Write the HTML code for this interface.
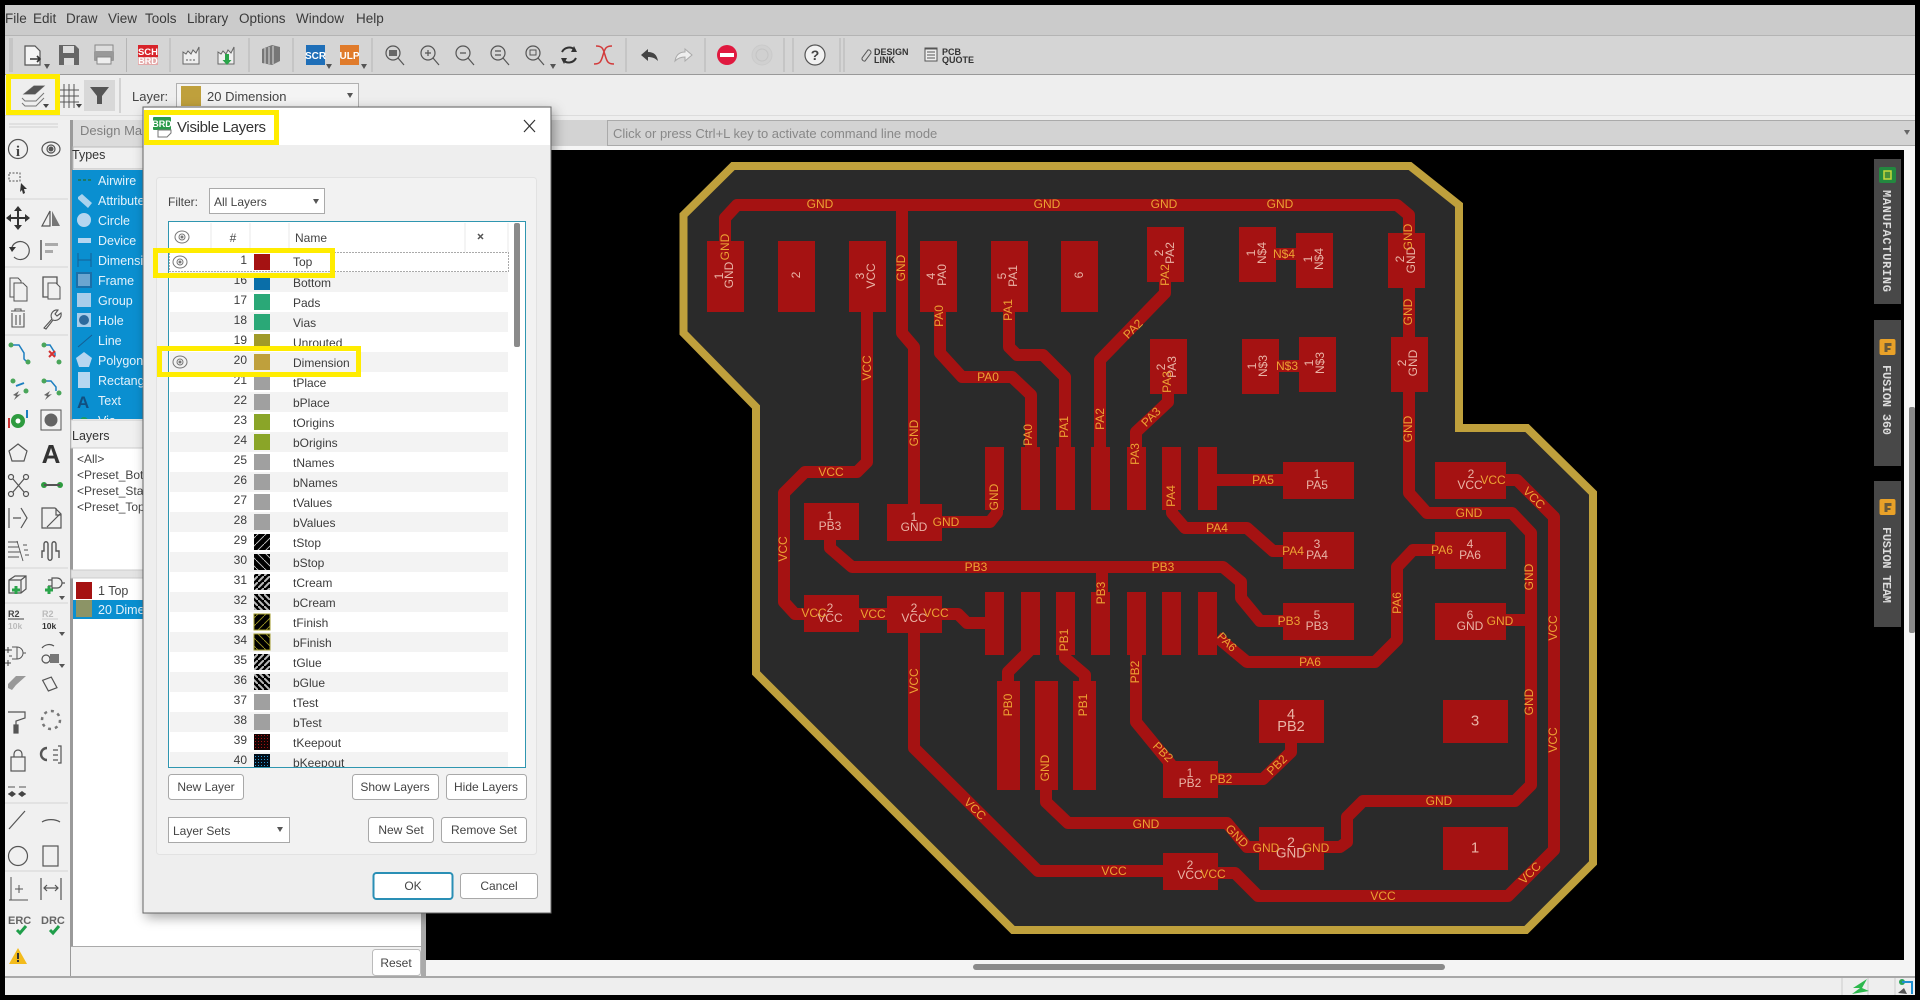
<!DOCTYPE html>
<html lang="en"><head><meta charset="utf-8"><title>EAGLE Visible Layers</title>
<style>
html,body{margin:0;padding:0;background:#000;width:1920px;height:1000px;overflow:hidden}
svg{display:block}
text{font-family:"Liberation Sans",sans-serif}
.o text,text.o{fill:#eda233;font-size:12px;text-anchor:middle;dominant-baseline:central}
.p text{fill:#e9b4a6;font-size:12px;text-anchor:middle;dominant-baseline:central}
.m text{fill:#3a3a3a;font-size:13.5px}
.u{fill:#3c3c3c;font-size:12px}
.b{fill:#444;font-size:12px;text-anchor:middle}
.w{fill:#e4f2fb;font-size:12.5px}
.v text{fill:#dcdcdc;font-family:"Liberation Mono",monospace;font-size:12px;font-weight:bold}
.i{fill:none;stroke:#555;stroke-width:1.2}
</style></head><body>
<svg width="1920" height="1000" viewBox="0 0 1920 1000" xmlns="http://www.w3.org/2000/svg">
<defs>
<filter id="sh" x="-10%" y="-10%" width="125%" height="125%"><feDropShadow dx="3" dy="4" stdDeviation="6" flood-color="#000" flood-opacity=".35"/></filter>
<pattern id="h1" width="8" height="8" patternUnits="userSpaceOnUse"><rect width="8" height="8" fill="#000"/><path d="M0 8L8 0" stroke="#ccc" stroke-width=".9"/></pattern>
<pattern id="h2" width="8" height="8" patternUnits="userSpaceOnUse"><rect width="8" height="8" fill="#000"/><path d="M0 0L8 8" stroke="#ccc" stroke-width=".9"/></pattern>
<pattern id="h3" width="6" height="6" patternUnits="userSpaceOnUse"><rect width="6" height="6" fill="#000"/><path d="M-1 7L7 -1" stroke="#bbb" stroke-width="2"/></pattern>
<pattern id="h4" width="6" height="6" patternUnits="userSpaceOnUse"><rect width="6" height="6" fill="#000"/><path d="M-1 -1L7 7" stroke="#bbb" stroke-width="2"/></pattern>
<pattern id="h5" width="8" height="8" patternUnits="userSpaceOnUse"><rect width="8" height="8" fill="#000"/><path d="M0 8L8 0" stroke="#a09a28" stroke-width=".9"/></pattern>
<pattern id="h6" width="8" height="8" patternUnits="userSpaceOnUse"><rect width="8" height="8" fill="#000"/><path d="M0 0L8 8" stroke="#a09a28" stroke-width=".9"/></pattern>
<pattern id="d1" width="3" height="3" patternUnits="userSpaceOnUse"><rect width="3" height="3" fill="#160404"/><rect width="1" height="1" fill="#a51212"/></pattern>
<pattern id="d2" width="3" height="3" patternUnits="userSpaceOnUse"><rect width="3" height="3" fill="#03101c"/><rect width="1" height="1" fill="#2a9ad8"/></pattern>
<clipPath id="tb"><rect x="169" y="222" width="356" height="545"/></clipPath>
<clipPath id="bl"><rect x="72" y="170" width="120" height="249"/></clipPath>
<g id="eye"><ellipse cx="0" cy="0" rx="7" ry="6" fill="none" stroke="#777" stroke-width="1"/><circle r="3" fill="none" stroke="#777"/><circle r="1.5" fill="#777"/></g>
<g id="fo"><rect x="-8" y="-8" width="16" height="16" rx="2" fill="#e9a128"/><path d="M-3 5V-4H4V-1H0V1H3V3H0V5Z" fill="#6a5a3a"/></g>
</defs>

<rect width="1920" height="1000" fill="#000"/>
<rect x="5" y="5" width="1910" height="990" fill="#eee"/>

<!-- menu -->
<rect x="5" y="5" width="1910" height="30" fill="#cbcbcb"/>
<rect x="5" y="35" width="1910" height="1" fill="#b4b4b4"/>
<rect x="5" y="36" width="1910" height="38" fill="#d5d5d5"/>
<rect x="5" y="74" width="1910" height="1" fill="#999"/>
<rect x="5" y="75" width="1910" height="40" fill="#eee"/>
<rect x="5" y="115" width="1910" height="1" fill="#dcdcdc"/>
<g class="m"><text x="5" y="23">File</text><text x="33" y="23">Edit</text><text x="66" y="23">Draw</text><text x="108" y="23">View</text><text x="145" y="23">Tools</text><text x="187" y="23">Library</text><text x="239" y="23">Options</text><text x="296" y="23">Window</text><text x="356" y="23">Help</text></g>

<!-- toolbar separators -->
<path d="M10 38v34M12 38v34M126.500 38v34M170 38v34M249 38v34M293 38v34M372 38v34M626 38v34M705 38v34M784 38v34M793 38v34M840 38v34M844 38v34M120 78v35" stroke="#b5b5b5"/>
<!-- toolbar icons -->
<path d="M25 46h10l5 5v14H25z" fill="#f4f4f4" stroke="#555" stroke-width="1.200"/><path d="M30 59h10m-3-3l3 3-3 3" fill="none" stroke="#333" stroke-width="1.600"/><path d="M44 64h6l-3 5z" fill="#555"/>
<path d="M59 45h16l4 4v16H59z" fill="#666"/><rect x="63" y="46" width="11" height="7" fill="#ddd"/><rect x="64" y="58" width="10" height="7" fill="#ddd"/>
<rect x="95" y="45" width="18" height="7" fill="#ddd" stroke="#888"/><rect x="94" y="51" width="20" height="10" rx="1" fill="#999"/><rect x="97" y="57" width="14" height="7" fill="#eee" stroke="#888"/>
<rect x="138" y="45" width="20" height="12" fill="#d8232a"/><rect x="138" y="57" width="20" height="8" fill="#e4a8a8"/>
<text x="148" y="55" font-size="9.500" font-weight="bold" fill="#fff" text-anchor="middle">SCH</text><text x="148" y="64" font-size="9" font-weight="bold" fill="#fff" text-anchor="middle">BRD</text>
<path d="M183 64V52l3 2 2-3 3 3 2-4 3 3 3-6v17z" fill="#eee" stroke="#666"/><path d="M186 60h10" stroke="#555" stroke-dasharray="2 1.500"/>
<path d="M218 64V52l3 2 2-3 3 3 2-4 3 3 3-6v17z" fill="#eee" stroke="#666"/><path d="M225 54v6h-2.500l4.500 5 4.500-5H229v-6z" fill="#2aa44a"/>
<path d="M262 49l10-4 8 2v14l-8 4-10-2z" fill="#777"/><path d="M265 48v16M269 47v17M273 46v18" stroke="#ddd"/>
<rect x="306" y="45" width="19" height="20" fill="#1f6fb8"/><text x="315.500" y="59" font-size="10" font-weight="bold" fill="#fff" text-anchor="middle">SCR</text><path d="M326 64h6l-3 5z" fill="#555"/>
<rect x="340" y="45" width="19" height="20" fill="#e07b2b"/><text x="349.500" y="59" font-size="10" font-weight="bold" fill="#fff" text-anchor="middle">ULP</text><path d="M361 64h6l-3 5z" fill="#555"/>
<g fill="none" stroke="#555" stroke-width="1.200"><circle cx="393" cy="53" r="7"/><path d="M398 58l6 7"/><circle cx="428" cy="53" r="7"/><path d="M433 58l6 7M428 50v6M425 53h6"/><circle cx="463" cy="53" r="7"/><path d="M468 58l6 7M460 53h6"/><circle cx="498" cy="53" r="7"/><path d="M503 58l6 7M495 51h6M495 55h6"/><circle cx="533" cy="53" r="7"/><path d="M538 58l6 7"/></g>
<rect x="389" y="50" width="8" height="6" fill="#666"/><rect x="530" y="50" width="6" height="5" fill="none" stroke="#555"/><path d="M550 64h6l-3 5z" fill="#555"/>
<path d="M562 52a8 8 0 0 1 13-2M576 58a8 8 0 0 1-13 2" fill="none" stroke="#333" stroke-width="2"/><path d="M574 46l3 6-6 0zM564 64l-3-6 6 0z" fill="#333"/>
<path d="M596 46c6 0 7 2 9 9s3 9 9 9M612 46c-6 0-7 2-9 9s-3 9-9 9" fill="none" stroke="#d23a3a" stroke-width="1.500"/>
<path d="M641 55l7-6v3c6 0 9 3 10 9-3-3-6-4-10-4v4z" fill="#444"/>
<path d="M692 55l-7-6v3c-6 0-9 3-10 9 3-3 6-4 10-4v4z" fill="#eee" stroke="#aaa"/>
<ellipse cx="727" cy="55" rx="10" ry="10" fill="#e0193f"/><rect x="720" y="53" width="14" height="4" fill="#fff"/>
<ellipse cx="762" cy="55" rx="10" ry="10" fill="#d0d0d0" stroke="#cacaca"/><circle cx="762" cy="55" r="6" fill="none" stroke="#c4c4c4"/>
<ellipse cx="815" cy="55" rx="10" ry="10" fill="#f2f2f2" stroke="#555" stroke-width="1.200"/><text x="815" y="60" font-size="14" font-weight="bold" fill="#444" text-anchor="middle">?</text>
<path d="M862 58l6-8a2.500 2.500 0 0 1 3 3l-6 8a2.500 2.500 0 0 1-3-3z" fill="none" stroke="#555"/>
<g font-size="9" font-weight="bold" fill="#333"><text x="874" y="55">DESIGN</text><text x="874" y="63">LINK</text><text x="942" y="55">PCB</text><text x="942" y="63">QUOTE</text></g>
<rect x="925" y="48" width="12" height="13" fill="#eee" stroke="#555"/><path d="M925 49h12M927 52h8M927 55h8M927 58h8" stroke="#555"/>

<!-- toolbar 2 -->
<path d="M24 94l10-8h10l-9 8zM22 98l3 3h11l8-8M22 103l3 3h11l8-8" fill="none" stroke="#777"/><path d="M24 94l10-8h10l-9 8z" fill="#555"/><path d="M43 104h6l-3 4z" fill="#444"/>
<path d="M64 84v24M69 84v24M74 84v24M60 90h19M60 96h19M60 102h19" stroke="#555"/><path d="M76 104h6l-3 4z" fill="#444"/>
<rect x="84" y="80" width="31" height="31" fill="#d8d8d8"/><path d="M90 87h19l-7 9v8h-5v-8z" fill="#555"/>
<text x="132" y="101" font-size="13" fill="#444">Layer:</text>
<rect x="176.500" y="83.500" width="182" height="28" fill="#f4f4f4" stroke="#b0b0b0"/><rect x="181" y="86" width="20" height="20" fill="#bfa03c"/>
<text x="207" y="101" font-size="13" fill="#444">20 Dimension</text><path d="M347 93h6l-3 5z" fill="#555"/>

<!-- command row -->
<rect x="71" y="120" width="1844" height="26" fill="#d3d3d3"/>
<rect x="71" y="120" width="80" height="27" fill="#dcdcdc"/>
<text x="80" y="135" font-size="13" fill="#7f7f7f">Design Manager</text>
<rect x="607" y="120" width="1308" height="1" fill="#aaa"/><rect x="607" y="145" width="1308" height="1" fill="#aaa"/><rect x="607" y="120" width="1" height="26" fill="#aaa"/>
<rect x="426" y="146" width="1489" height="4" fill="#f5f5f5"/>
<text x="613" y="138" font-size="13" fill="#888">Click or press Ctrl+L key to activate command line mode</text>
<path d="M1904 130h6l-3 5z" fill="#666"/>

<!-- canvas -->
<rect x="426" y="150" width="1478" height="810" fill="#000"/>
<rect x="1904" y="150" width="11" height="826" fill="#f6f6f6"/>
<rect x="426" y="960" width="1489" height="16" fill="#f4f4f4"/>
<rect x="1909" y="407" width="6" height="226" rx="2" fill="#8a8a8a"/>
<rect x="973" y="964" width="472" height="6" rx="3" fill="#8a8a8a"/>

<!-- board -->
<polygon points="733,166 1410,166 1459,205 1459,428 1527,428 1593,493 1593,863 1526,930 1013,930 756,673 756,407 683.500,333 683.500,215" fill="#2a2a2a" stroke="#bfa03c" stroke-width="8"/>
<g fill="none" stroke="#a51212" stroke-width="12" stroke-linejoin="round">
<path d="M725 241V218L737 205H1397L1409 215V493L1427 513H1512L1531 533V785L1515 801H1363L1347 817V842L1340 847H1323"/>
<path d="M1506 620H1531"/>
<path d="M902 205V333L914 347V505"/>
<path d="M942 522H990L997 513V508"/>
<path d="M1276 254H1296M1279 366H1299"/>
<path d="M867 312V462L857 472H805L784 493V602L795 614H804"/>
<path d="M859 614H887M942 614H958L967 623H985"/>
<path d="M914 633V748L1038 871H1163"/>
<path d="M1218 873H1235L1258 896H1508L1554 850V517L1517 480H1506"/>
<path d="M940 312V353L962 377H1012L1031 395V447"/>
<path d="M1009 312V347L1017 355H1043L1065 377V447"/>
<path d="M1165 282V293L1100 360V447"/>
<path d="M1168 394V402L1136 432V447"/>
<path d="M1172 510V513L1185 528H1247L1273 551H1283"/>
<path d="M1217 480H1283"/>
<path d="M830 540V548L852 567H1223L1241 582V598L1260 621H1283"/>
<path d="M1102 567V592"/>
<path d="M1030 650L1008 672V682"/>
<path d="M1065 655V658L1085 675V682"/>
<path d="M1136 655V722L1173 767"/>
<path d="M1218 779H1263L1291 752V743"/>
<path d="M1046 790V802L1068 823H1227L1247 847H1259"/>
<path d="M1217 637L1247 662H1375L1397 640V567L1413 550H1435"/>
<path d="M1324 847H1340"/>
</g>
<g fill="#a51212">
<rect x="707" y="241" width="37" height="71"/><rect x="778" y="241" width="37" height="71"/><rect x="849" y="241" width="37" height="71"/><rect x="920" y="241" width="37" height="71"/><rect x="991" y="241" width="37" height="71"/><rect x="1061" y="241" width="37" height="71"/>
<rect x="1147" y="227" width="37" height="55"/><rect x="1150" y="339" width="37" height="55"/>
<rect x="1239" y="227" width="37" height="55"/><rect x="1296" y="233" width="37" height="55"/><rect x="1388" y="233" width="37" height="55"/>
<rect x="1242" y="339" width="37" height="55"/><rect x="1299" y="337" width="37" height="55"/><rect x="1391" y="337" width="37" height="55"/>
<rect x="985" y="447" width="19" height="63"/><rect x="1021" y="447" width="19" height="63"/><rect x="1056" y="447" width="19" height="63"/><rect x="1091" y="447" width="19" height="63"/><rect x="1127" y="447" width="19" height="63"/><rect x="1162" y="447" width="19" height="63"/><rect x="1198" y="447" width="19" height="63"/>
<rect x="985" y="592" width="19" height="63"/><rect x="1021" y="592" width="19" height="63"/><rect x="1056" y="592" width="19" height="63"/><rect x="1091" y="592" width="19" height="63"/><rect x="1127" y="592" width="19" height="63"/><rect x="1162" y="592" width="19" height="63"/><rect x="1198" y="592" width="19" height="63"/>
<rect x="804" y="503" width="55" height="37"/><rect x="887" y="504" width="55" height="37"/><rect x="804" y="595" width="55" height="37"/><rect x="887" y="596" width="55" height="37"/>
<rect x="997" y="681" width="23" height="109"/><rect x="1035" y="681" width="23" height="109"/><rect x="1073" y="681" width="23" height="109"/>
<rect x="1163" y="761" width="55" height="37"/><rect x="1163" y="853" width="55" height="37"/>
<rect x="1259" y="700" width="65" height="43"/><rect x="1259" y="827" width="65" height="43"/><rect x="1443" y="700" width="65" height="43"/><rect x="1443" y="827" width="65" height="43"/>
<rect x="1283" y="462" width="71" height="37"/><rect x="1435" y="462" width="71" height="37"/><rect x="1283" y="532" width="71" height="37"/><rect x="1435" y="532" width="71" height="37"/><rect x="1283" y="603" width="71" height="37"/><rect x="1435" y="603" width="71" height="37"/>
</g>
<!-- pad labels -->
<g class="p">
<text x="719" y="276" transform="rotate(-90 719 276)">1</text><text x="729" y="275" transform="rotate(-90 729 275)">GND</text>
<text x="796" y="275" transform="rotate(-90 796 275)">2</text>
<text x="860" y="276" transform="rotate(-90 860 276)">3</text><text x="871" y="276" transform="rotate(-90 871 276)">VCC</text>
<text x="931" y="276" transform="rotate(-90 931 276)">4</text><text x="942" y="275" transform="rotate(-90 942 275)">PA0</text>
<text x="1002" y="276" transform="rotate(-90 1002 276)">5</text><text x="1013" y="276" transform="rotate(-90 1013 276)">PA1</text>
<text x="1079" y="275" transform="rotate(-90 1079 275)">6</text>
<text x="1159" y="253" transform="rotate(-90 1159 253)">2</text><text x="1170" y="253" transform="rotate(-90 1170 253)">PA2</text>
<text x="1251" y="253" transform="rotate(-90 1251 253)">1</text><text x="1262" y="253" transform="rotate(-90 1262 253)">N$4</text>
<text x="1308" y="259" transform="rotate(-90 1308 259)">1</text><text x="1319" y="259" transform="rotate(-90 1319 259)">N$4</text>
<text x="1400" y="259" transform="rotate(-90 1400 259)">2</text><text x="1411" y="260" transform="rotate(-90 1411 260)">GND</text>
<text x="1161" y="367" transform="rotate(-90 1161 367)">2</text><text x="1172" y="367" transform="rotate(-90 1172 367)">PA3</text>
<text x="1252" y="366" transform="rotate(-90 1252 366)">1</text><text x="1263" y="366" transform="rotate(-90 1263 366)">N$3</text>
<text x="1309" y="363" transform="rotate(-90 1309 363)">1</text><text x="1320" y="363" transform="rotate(-90 1320 363)">N$3</text>
<text x="1402" y="363" transform="rotate(-90 1402 363)">2</text><text x="1413" y="363" transform="rotate(-90 1413 363)">GND</text>
<text x="1317" y="474">1</text><text x="1317" y="485">PA5</text>
<text x="1471" y="474">2</text><text x="1470" y="485">VCC</text>
<text x="1317" y="544">3</text><text x="1317" y="555">PA4</text>
<text x="1470" y="544">4</text><text x="1470" y="555">PA6</text>
<text x="1317" y="615">5</text><text x="1317" y="626">PB3</text>
<text x="1470" y="615">6</text><text x="1470" y="626">GND</text>
<text x="830" y="516">1</text><text x="830" y="526">PB3</text>
<text x="914" y="517">1</text><text x="914" y="527">GND</text>
<text x="830" y="608">2</text><text x="830" y="618">VCC</text>
<text x="914" y="608">2</text><text x="914" y="618">VCC</text>
<text x="1190" y="773">1</text><text x="1190" y="783">PB2</text>
<text x="1190" y="865">2</text><text x="1190" y="875">VCC</text>
<text x="1291" y="715" style="font-size:14.500px">4</text><text x="1291" y="727" style="font-size:14.500px">PB2</text>
<text x="1475" y="721" style="font-size:15px">3</text><text x="1475" y="848" style="font-size:15px">1</text>
<text x="1291" y="842" style="font-size:14px">2</text><text x="1291" y="853" style="font-size:13.500px">GND</text>
</g>
<!-- trace labels -->
<g class="o">
<text x="820" y="204">GND</text><text x="1047" y="204">GND</text><text x="1164" y="204">GND</text><text x="1280" y="204">GND</text>
<text x="725" y="247" transform="rotate(-90 725 247)">GND</text><text x="901" y="268" transform="rotate(-90 901 268)">GND</text>
<text x="939" y="316" transform="rotate(-90 939 316)">PA0</text><text x="1008" y="310" transform="rotate(-90 1008 310)">PA1</text>
<text x="867" y="368" transform="rotate(-90 867 368)">VCC</text><text x="988" y="377">PA0</text>
<text x="914" y="433" transform="rotate(-90 914 433)">GND</text><text x="1028" y="435" transform="rotate(-90 1028 435)">PA0</text>
<text x="1064" y="427" transform="rotate(-90 1064 427)">PA1</text><text x="1100" y="419" transform="rotate(-90 1100 419)">PA2</text>
<text x="1135" y="454" transform="rotate(-90 1135 454)">PA3</text>
<text x="1133" y="329" transform="rotate(-45 1133 329)">PA2</text><text x="1151" y="417" transform="rotate(-45 1151 417)">PA3</text>
<text x="831" y="472">VCC</text><text x="946" y="522">GND</text><text x="994" y="497" transform="rotate(-90 994 497)">GND</text>
<text x="783" y="549" transform="rotate(-90 783 549)">VCC</text>
<text x="1165" y="275" transform="rotate(-90 1165 275)">PA2</text><text x="1284" y="254">N$4</text>
<text x="1408" y="237" transform="rotate(-90 1408 237)">GND</text><text x="1408" y="312" transform="rotate(-90 1408 312)">GND</text>
<text x="1167" y="382" transform="rotate(-90 1167 382)">PA3</text><text x="1287" y="366">N$3</text>
<text x="1408" y="429" transform="rotate(-90 1408 429)">GND</text><text x="1263" y="480">PA5</text><text x="1493" y="480">VCC</text>
<text x="1534" y="498" transform="rotate(45 1534 498)">VCC</text><text x="1469" y="513">GND</text>
<text x="1171" y="496" transform="rotate(-90 1171 496)">PA4</text><text x="1217" y="528">PA4</text><text x="1293" y="551">PA4</text><text x="1442" y="550">PA6</text>
<text x="1529" y="577" transform="rotate(-90 1529 577)">GND</text><text x="1500" y="621">GND</text><text x="1553" y="628" transform="rotate(-90 1553 628)">VCC</text>
<text x="1289" y="621">PB3</text><text x="1397" y="603" transform="rotate(-90 1397 603)">PA6</text>
<text x="1227" y="642" transform="rotate(45 1227 642)">PA6</text><text x="1310" y="662">PA6</text>
<text x="1529" y="702" transform="rotate(-90 1529 702)">GND</text><text x="1553" y="740" transform="rotate(-90 1553 740)">VCC</text>
<text x="1277" y="765" transform="rotate(-45 1277 765)">PB2</text><text x="1221" y="779">PB2</text><text x="1439" y="801">GND</text>
<text x="1237" y="836" transform="rotate(45 1237 836)">GND</text><text x="1266" y="848">GND</text><text x="1316" y="848">GND</text>
<text x="1213" y="874">VCC</text><text x="1383" y="896">VCC</text><text x="1530" y="873" transform="rotate(-45 1530 873)">VCC</text>
<text x="976" y="567">PB3</text><text x="1163" y="567">PB3</text><text x="1101" y="593" transform="rotate(-90 1101 593)">PB3</text>
<text x="814" y="613">VCC</text><text x="873" y="614">VCC</text><text x="936" y="613">VCC</text>
<text x="914" y="681" transform="rotate(-90 914 681)">VCC</text><text x="1064" y="640" transform="rotate(-90 1064 640)">PB1</text>
<text x="1135" y="672" transform="rotate(-90 1135 672)">PB2</text><text x="1008" y="705" transform="rotate(-90 1008 705)">PB0</text>
<text x="1083" y="705" transform="rotate(-90 1083 705)">PB1</text><text x="1045" y="768" transform="rotate(-90 1045 768)">GND</text>
<text x="975" y="809" transform="rotate(45 975 809)">VCC</text><text x="1146" y="824">GND</text>
<text x="1163" y="752" transform="rotate(45 1163 752)">PB2</text><text x="1114" y="871">VCC</text>
</g>

<!-- right tabs -->
<rect x="1874" y="159" width="27" height="145" fill="#484848"/><rect x="1874" y="320" width="27" height="146" fill="#484848"/><rect x="1874" y="481" width="27" height="146" fill="#484848"/>
<rect x="1879" y="167" width="17" height="16" rx="2" fill="#23883f"/><rect x="1884" y="171" width="7" height="8" fill="#4a8f3a" stroke="#c8d83a" stroke-width="1.500"/>
<use href="#fo" x="1887.500" y="347"/><use href="#fo" x="1887.500" y="507"/>
<g class="v"><text x="0" y="0" transform="translate(1883 190) rotate(90)" textLength="102">MANUFACTURING</text><text x="0" y="0" transform="translate(1883 365) rotate(90)" textLength="70">FUSION 360</text><text x="0" y="0" transform="translate(1883 527) rotate(90)" textLength="76">FUSION TEAM</text></g>

<!-- left toolbar -->
<rect x="5" y="120" width="65" height="856" fill="#f0f0f0"/>
<path d="M9 124h49M9 127h49" stroke="#d0d0d0"/>
<path d="M5 199h63M5 267h63M5 335h63M5 568h63M5 603h63M5 803h63M5 871h63" stroke="#d4d4d4"/>
<g class="i">
<!-- info / eye -->
<circle cx="18" cy="149" r="9.500"/><ellipse cx="51" cy="149" rx="9" ry="7"/><circle cx="51" cy="149" r="4"/>
<rect x="9" y="173" width="11" height="8" stroke-dasharray="2 1.500" stroke-width="1"/>
<!-- mirror, rotate -->
<path d="M50 211l-8 15h8z"/>
<path d="M12 247a9 9 0 1 1 2 10"/>
<path d="M41 240v20" stroke-width="1.500"/>
<!-- copy, paste -->
<path d="M10 278h8l3 3v16h-11z" stroke-width="1"/><path d="M14 283h9l4 4v14h-13z" fill="#f0f0f0" stroke-width="1"/>
<path d="M43 277h14v20h-14z" stroke-width="1.300"/><path d="M48 283h8l4 4v12h-12z" fill="#f0f0f0" stroke-width="1"/>
<!-- delete, wrench -->
<path d="M11 311h14M12 313v14h12v-14M16 315v10M20 315v10M15 311v-2h6v2" stroke-width="1.100"/>
<path d="M44 328l8-9a6 6 0 0 1 6-9l-3 4 2 2 4-3a6 6 0 0 1-8 7l-7 9z" stroke-width="1.100"/>
<!-- polygon, network, arrows -->
<polygon points="18,444 27,451 24,461 12,461 9,451"/>
<circle cx="11" cy="477" r="2.500"/><circle cx="26" cy="477" r="2.500"/><circle cx="11" cy="494" r="2.500"/><circle cx="26" cy="494" r="2.500"/><path d="M13 479l11 13M24 479l-11 13"/>
<path d="M9 508v20M21 508l6 10-6 10M13 518h8"/>
<path d="M42 508h13l6 6v14H42zM47 527l13-13M56 508v7h5"/>
<path d="M8 542h10M8 547h11M8 552h12M8 557h11M17 541l6 20M23 545h4M24 550h4M25 555h4" stroke-width=".9"/>
<path d="M42 558v-7h2v-7c0-3 4-3 4 0v14c0 3 4 3 4 0v-14c0-3 4-3 4 0v7h3v7" stroke-width="1.400"/>
<!-- box, gate -->
<path d="M9 580l6-4h11v13l-5 4H9zM9 580h12v13M21 580l5-4"/>
<path d="M52 578h5a5 5 0 0 1 0 10h-5zM62 583h3M48 580h4M48 586h4"/>
<!-- smash etc -->
<path d="M12 647h5v12h-5M17 647a6 6 0 0 1 0 12M23 653h3M9 650H12M9 656h3" stroke-width="1"/>
<circle cx="46" cy="659" r="4"/><path d="M42 648a9 9 0 0 1 12-2"/>
<path d="M45 679l7-6 9 8-7 6z" transform="translate(-3 3) rotate(20 50 680)"/>
<path d="M8 712h17v6l-9 3v4"/><rect x="14" y="725" width="4" height="8" fill="#555"/>
<circle cx="51" cy="720" r="9" stroke="#777" stroke-dasharray="3 4" stroke-width="2.500"/>
<rect x="11" y="757" width="14" height="14"/><path d="M14 757v-3a4 4 0 0 1 8 0v3"/>
<path d="M58 746h3v17h-3M53 750h5M53 755h5M53 760h5"/><path d="M47 748a6 6 0 0 0 0 12" stroke-width="2.400"/>
<path d="M8 787h7M19 787h7" stroke-width="1.100"/>
<path d="M9 829l16-18"/><path d="M42 822a12 7 0 0 1 18 0"/>
<circle cx="18" cy="866" r="0"/><circle cx="18" cy="856" r="9.500"/><rect x="43" y="846" width="15" height="20"/>
<path d="M11 877V900M9 900h19M15 889h8M19 885v8" stroke-width="1"/>
<path d="M41 878V900M61 878V900M44 888h14M47 885l-3 3 3 3M55 885l3 3-3 3"/>
</g>
<text x="18" y="156" font-family="Liberation Serif" font-size="15" font-weight="bold" fill="#444" text-anchor="middle" style="font-family:'Liberation Serif',serif">i</text>
<circle cx="51" cy="149" r="2.500" fill="#555"/>
<path d="M21 183l6 6h-3l1 4-2 1-1-4-2 2z" fill="#333"/>
<path d="M18 210l4 5h-3v6h6v-3l5 4-5 4v-3h-6v6h3l-4 5-4-5h3v-6h-6v3l-5-4 5-4v3h6v-6h-3z" fill="#333" transform="translate(0 -4)"/>
<path d="M52 211l8 15h-8z" fill="#777"/><path d="M9 247h7l-4 5z" fill="#333"/>
<rect x="45" y="243" width="13" height="3" fill="#aaa"/><rect x="45" y="250" width="8" height="3" fill="#aaa"/>
<g fill="none" stroke="#1e7fc0" stroke-width="1.500">
<path d="M11 345h8l5 8v6l3 3"/><path d="M44 345h6l5 8v3"/><path d="M44 381h7l5 6v4"/>
</g>
<g fill="#4aa55a"><circle cx="11" cy="345" r="2.500"/><circle cx="28" cy="362" r="2.500"/><circle cx="44" cy="345" r="2.500"/><circle cx="59" cy="362" r="2.500"/><circle cx="44" cy="381" r="2.500"/><circle cx="59" cy="393" r="2.500"/><circle cx="13" cy="381" r="2.500"/><circle cx="26" cy="391" r="2.500"/></g>
<path d="M49 351l6 6M55 351l-6 6" stroke="#d43030" stroke-width="2"/><path d="M16 386l8-3" stroke="#1e7fc0" stroke-width="2"/>
<path d="M13 395l6-4-2 4 4-1-7 6 2-4zM44 395l6-4-2 4 4-1-7 6 2-4z" fill="#666"/>
<circle cx="18" cy="421" r="7" fill="#2e9b3f"/><circle cx="18" cy="421" r="2.500" fill="#fff"/><path d="M27 410v8" stroke="#1e7fc0" stroke-width="2"/><path d="M9 418v10" stroke="#c33" stroke-width="2"/>
<rect x="41" y="410" width="20" height="20" fill="#f4f4f4" stroke="#555"/><circle cx="51" cy="420" r="6.500" fill="#666"/>
<text x="51" y="463" font-size="26" font-weight="bold" text-anchor="middle" fill="#333">A</text>
<g fill="#2e9b3f"><circle cx="44" cy="485" r="3"/><circle cx="60" cy="485" r="3"/></g><path d="M44 485h16" stroke="#555" stroke-width="2"/>
<path d="M12 590h8M16 586v8M45 590h8M49 586v8" stroke="#2aa44a" stroke-width="3"/>
<path d="M59 596h6l-3 4zM59 632h6l-3 4zM59 664h6l-3 4z" fill="#555"/>
<text x="8" y="617" font-size="9" font-weight="bold" fill="#444">R2</text><text x="8" y="629" font-size="8.500" fill="#bbb" font-weight="bold">10k</text><path d="M8 619h16" stroke="#444"/>
<text x="42" y="617" font-size="9" font-weight="bold" fill="#bbb">R2</text><text x="42" y="629" font-size="8.500" font-weight="bold" fill="#333">10k</text><path d="M42 619h16" stroke="#ccc"/>
<rect x="50" y="654" width="9" height="9" fill="#777"/>
<path d="M8 647v6M5 650h6M8 660v6M5 663h6" stroke="#444"/>
<path d="M8 684l8-8h10l-10 9-4 5-4-2z" fill="#999"/>
<path d="M8 794l4-3 4 3-4 3zM26 794l-4-3-4 3 4 3z" fill="#444"/><path d="M8 794h6M26 794h-6" stroke="#444"/>
<text x="8" y="924" font-size="11" font-weight="bold" fill="#666">ERC</text><text x="41" y="924" font-size="11" font-weight="bold" fill="#666">DRC</text>
<path d="M17 930l3 3 6-7" fill="none" stroke="#1f9e4a" stroke-width="3"/><path d="M50 930l3 3 6-7" fill="none" stroke="#1f9e4a" stroke-width="3"/>
<path d="M18 948l9 16H9z" fill="#f3bb1c"/><rect x="17" y="953" width="2" height="6" fill="#333"/><rect x="17" y="960" width="2" height="2" fill="#333"/>

<!-- side panel -->
<rect x="70" y="120" width="3" height="858" fill="#9a9a9a"/>
<rect x="73" y="147" width="350" height="800" fill="#fff"/>
<rect x="421" y="147" width="5" height="830" fill="#aaa"/>
<rect x="73" y="147" width="348" height="22" fill="#f0f0f0" stroke="#bbb"/>
<text x="72" y="159" font-size="12.500" fill="#333">Types</text>
<rect x="72" y="170" width="348" height="249" fill="#0a8fd0"/>
<g clip-path="url(#bl)">
<path d="M78 180h14" stroke="#1c7a6a" stroke-width="2" stroke-dasharray="3 2"/>
<path d="M78 197l4-3 10 9-4 5-10-9z" fill="#a9d3ee"/>
<circle cx="84" cy="220" r="7" fill="#b6d6f0"/><rect x="78" y="238" width="13" height="5" fill="#b6d6f0"/>
<path d="M78 253v14M91 253v14M78 260h13" stroke="#155f94"/>
<rect x="77" y="273" width="14" height="14" fill="#6ba5d0" stroke="#1b6fa8" stroke-width="2"/>
<rect x="77" y="293" width="14" height="14" fill="#a8cdea"/>
<rect x="77" y="313" width="14" height="14" fill="#a8cdea"/><circle cx="84" cy="320" r="5" fill="#2d6a9d"/>
<path d="M78 347l14-12" stroke="#155f94"/>
<polygon points="84,352 92,358 89,367 79,367 76,358" fill="#b6d6f0"/><rect x="78" y="372" width="12" height="16" fill="#b6d6f0"/>
<text x="77" y="408" font-size="17" font-weight="bold" fill="#114f80">A</text>
<circle cx="84" cy="421" r="4" fill="#1c9e5f"/>
<g class="w"><text x="98" y="185">Airwire</text><text x="98" y="205">Attribute</text><text x="98" y="225">Circle</text><text x="98" y="245">Device</text><text x="98" y="265">Dimension</text><text x="98" y="285">Frame</text><text x="98" y="305">Group</text><text x="98" y="325">Hole</text><text x="98" y="345">Line</text><text x="98" y="365">Polygon</text><text x="98" y="385">Rectangle</text><text x="98" y="405">Text</text><text x="98" y="425">Via</text></g>
</g>
<rect x="71" y="420" width="350" height="28" fill="#f0f0f0" stroke="#ccc"/>
<text x="72" y="440" font-size="12.500" fill="#333">Layers</text>
<g font-size="12" fill="#444"><text x="77" y="463">&lt;All&gt;</text><text x="77" y="479">&lt;Preset_Bottom&gt;</text><text x="77" y="495">&lt;Preset_Standard&gt;</text><text x="77" y="511">&lt;Preset_Top&gt;</text></g>
<rect x="71" y="570" width="350" height="8" fill="#e4e4e4" stroke="#ccc"/>
<rect x="76" y="582" width="16" height="17" fill="#a51212"/><text x="98" y="595" font-size="12.500" fill="#444">1 Top</text>
<rect x="73" y="600" width="348" height="19" fill="#0a8fd0"/><rect x="76" y="600" width="16" height="17" fill="#8c9466"/><text x="98" y="614" font-size="12.500" fill="#e4f2fb">20 Dimension</text>
<rect x="71" y="946" width="350" height="30" fill="#f0f0f0"/><rect x="71" y="946" width="350" height="1" fill="#aaa"/>
<rect x="372.500" y="949.500" width="48" height="26" rx="3" fill="#fff" stroke="#bbb"/><text x="396" y="967" class="b">Reset</text>

<!-- status -->
<rect x="5" y="976" width="1910" height="2" fill="#a8a8a8"/>
<path d="M1842 978v17M1868 978v17M1895 978v17" stroke="#ccc"/>
<path d="M1867 979l-14 9h7l-8 6 17-3-7-3z" fill="#2db84d"/>
<circle cx="1902" cy="982" r="3" fill="#28a457"/><path d="M1902 982h10v12" fill="none" stroke="#1e8fd0" stroke-width="2"/><path d="M1898 993l6-5 3 6z" fill="#555"/>

<!-- dialog -->
<g filter="url(#sh)"><rect x="143" y="107" width="408" height="806" fill="#eee" stroke="#666"/></g>
<rect x="144" y="108" width="406" height="37" fill="#fff"/>
<rect x="153" y="117" width="18" height="13" rx="1" fill="#2a9a4a"/><path d="M158 130h13v3l-4 4h-9z" fill="#fff" stroke="#777"/>
<text x="162" y="127" font-size="9" font-weight="bold" fill="#fff" text-anchor="middle">BRD</text>
<text x="177" y="132" font-size="15" fill="#333" textLength="89">Visible Layers</text>
<path d="M524 120l11 12M535 120l-11 12" stroke="#333" stroke-width="1.200"/>
<rect x="156.500" y="177.500" width="380" height="677" rx="3" fill="#f2f2f2" stroke="#e2e2e2"/>
<text x="168" y="206" font-size="12" fill="#444">Filter:</text>
<rect x="209.500" y="188.500" width="115" height="25" fill="#fff" stroke="#aaa"/><text x="214" y="206" font-size="12" fill="#444">All Layers</text><path d="M313 199h6l-3 5z" fill="#555"/>

<!-- table -->
<rect x="168.500" y="221.500" width="357" height="546" fill="#fff" stroke="#2f96b0"/>
<path d="M211 223v29M250 223v29M289 223v29M465 223v29M508 223v29" stroke="#e8e8e8"/>
<use href="#eye" x="182" y="237"/>
<text x="233" y="242" font-size="12" fill="#444" text-anchor="middle">#</text>
<text x="295" y="242" font-size="12" fill="#444">Name</text>
<path d="M478 234l5 5M483 234l-5 5" stroke="#555" stroke-width="1.500"/>
<g clip-path="url(#tb)">
<g fill="#f3f3f3">
<rect x="170" y="272" width="338" height="20"/><rect x="170" y="312" width="338" height="20"/><rect x="170" y="352" width="338" height="20"/><rect x="170" y="392" width="338" height="20"/><rect x="170" y="432" width="338" height="20"/><rect x="170" y="472" width="338" height="20"/><rect x="170" y="512" width="338" height="20"/><rect x="170" y="552" width="338" height="20"/><rect x="170" y="592" width="338" height="20"/><rect x="170" y="632" width="338" height="20"/><rect x="170" y="672" width="338" height="20"/><rect x="170" y="712" width="338" height="20"/><rect x="170" y="752" width="338" height="20"/>
</g>
<rect x="169.500" y="252.500" width="339" height="19" fill="none" stroke="#555" stroke-dasharray="1 2"/>
<use href="#eye" x="180" y="262"/><use href="#eye" x="180" y="362"/>
<g>
<rect x="254" y="254" width="16" height="16" fill="#a51212"/><rect x="254" y="274" width="16" height="16" fill="#0a6ea8"/><rect x="254" y="294" width="16" height="16" fill="#2aa877"/><rect x="254" y="314" width="16" height="16" fill="#2aa877"/><rect x="254" y="334" width="16" height="16" fill="#a09a28"/><rect x="254" y="354" width="16" height="16" fill="#bfa03c"/>
<rect x="254" y="374" width="16" height="16" fill="#a0a0a0"/><rect x="254" y="394" width="16" height="16" fill="#a0a0a0"/><rect x="254" y="414" width="16" height="16" fill="#8aa528"/><rect x="254" y="434" width="16" height="16" fill="#8aa528"/>
<rect x="254" y="454" width="16" height="16" fill="#a0a0a0"/><rect x="254" y="474" width="16" height="16" fill="#a0a0a0"/><rect x="254" y="494" width="16" height="16" fill="#a0a0a0"/><rect x="254" y="514" width="16" height="16" fill="#a0a0a0"/>
<rect x="254" y="534" width="16" height="16" fill="url(#h1)"/><rect x="254" y="554" width="16" height="16" fill="url(#h2)"/><rect x="254" y="574" width="16" height="16" fill="url(#h3)"/><rect x="254" y="594" width="16" height="16" fill="url(#h4)"/>
<rect x="254" y="614" width="16" height="16" fill="url(#h5)" stroke="#a09a28"/><rect x="254" y="634" width="16" height="16" fill="url(#h6)" stroke="#a09a28"/>
<rect x="254" y="654" width="16" height="16" fill="url(#h3)"/><rect x="254" y="674" width="16" height="16" fill="url(#h4)"/>
<rect x="254" y="694" width="16" height="16" fill="#a0a0a0"/><rect x="254" y="714" width="16" height="16" fill="#a0a0a0"/>
<rect x="254" y="734" width="16" height="16" fill="url(#d1)"/><rect x="254" y="754" width="16" height="16" fill="url(#d2)"/>
</g>
<g class="u" text-anchor="end">
<text x="247" y="264">1</text><text x="247" y="284">16</text><text x="247" y="304">17</text><text x="247" y="324">18</text><text x="247" y="344">19</text><text x="247" y="364">20</text><text x="247" y="384">21</text><text x="247" y="404">22</text><text x="247" y="424">23</text><text x="247" y="444">24</text><text x="247" y="464">25</text><text x="247" y="484">26</text><text x="247" y="504">27</text><text x="247" y="524">28</text><text x="247" y="544">29</text><text x="247" y="564">30</text><text x="247" y="584">31</text><text x="247" y="604">32</text><text x="247" y="624">33</text><text x="247" y="644">34</text><text x="247" y="664">35</text><text x="247" y="684">36</text><text x="247" y="704">37</text><text x="247" y="724">38</text><text x="247" y="744">39</text><text x="247" y="764">40</text>
</g>
<g class="u">
<text x="293" y="266">Top</text><text x="293" y="287">Bottom</text><text x="293" y="307">Pads</text><text x="293" y="327">Vias</text><text x="293" y="347">Unrouted</text><text x="293" y="367">Dimension</text><text x="293" y="387">tPlace</text><text x="293" y="407">bPlace</text><text x="293" y="427">tOrigins</text><text x="293" y="447">bOrigins</text><text x="293" y="467">tNames</text><text x="293" y="487">bNames</text><text x="293" y="507">tValues</text><text x="293" y="527">bValues</text><text x="293" y="547">tStop</text><text x="293" y="567">bStop</text><text x="293" y="587">tCream</text><text x="293" y="607">bCream</text><text x="293" y="627">tFinish</text><text x="293" y="647">bFinish</text><text x="293" y="667">tGlue</text><text x="293" y="687">bGlue</text><text x="293" y="707">tTest</text><text x="293" y="727">bTest</text><text x="293" y="747">tKeepout</text><text x="293" y="767">bKeepout</text>
</g>
</g>
<rect x="514" y="223" width="6" height="124" rx="2" fill="#8a8a8a"/>
<rect x="168.500" y="221.500" width="357" height="546" fill="none" stroke="#2f96b0"/>

<!-- dialog buttons -->
<g fill="#fff" stroke="#a8a8a8">
<rect x="168.500" y="774.500" width="75" height="25" rx="3"/><rect x="352.500" y="774.500" width="86" height="25" rx="3"/><rect x="446.500" y="774.500" width="80" height="25" rx="3"/>
<rect x="368.500" y="817.500" width="65" height="25" rx="3"/><rect x="441.500" y="817.500" width="85" height="25" rx="3"/><rect x="460.500" y="873.500" width="77" height="25" rx="3"/>
<rect x="168.500" y="817.500" width="121" height="25"/>
</g>
<rect x="373.500" y="873" width="79" height="26" rx="3" fill="#fff" stroke="#2a8fb5" stroke-width="2"/>
<g class="b"><text x="206" y="791" class="b">New Layer</text><text x="395" y="791" class="b">Show Layers</text><text x="486" y="791" class="b">Hide Layers</text><text x="401" y="834" class="b">New Set</text><text x="484" y="834" class="b">Remove Set</text><text x="413" y="890" class="b">OK</text><text x="499" y="890" class="b">Cancel</text></g>
<text x="173" y="835" font-size="12" fill="#444">Layer Sets</text><path d="M277 827h6l-3 5z" fill="#555"/>

<!-- yellow highlights -->
<g fill="none" stroke="#ffec00" stroke-width="5">
<rect x="8.500" y="76.500" width="49" height="36"/>
<rect x="146.500" y="112.500" width="130" height="30"/>
<rect x="155.500" y="250.500" width="177" height="25"/>
<rect x="159.500" y="348.500" width="199" height="26"/>
</g>
</svg>
</body></html>
